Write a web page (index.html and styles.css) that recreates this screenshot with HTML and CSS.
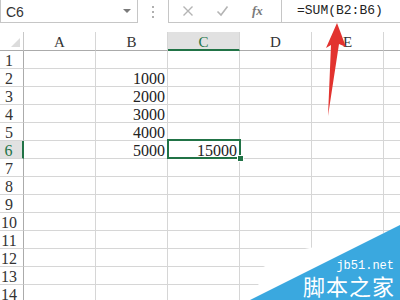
FILE: index.html
```html
<!DOCTYPE html>
<html>
<head>
<meta charset="utf-8">
<link rel="stylesheet" href="styles.css">
</head>
<body>
<div class="app">
  <div class="toolbar">
    <div class="namebox"><span class="ref">C6</span><span class="caret"></span></div>
    <div class="grip"><i></i><i></i><i></i></div>
    <div class="fnbox">
      <svg class="ico" width="12" height="12" viewBox="0 0 12 12"><path d="M1.5 1.5L10.5 10.5M10.5 1.5L1.5 10.5" stroke="#b4b4b4" stroke-width="1.4" fill="none"/></svg>
      <svg class="ico" width="13" height="12" viewBox="0 0 13 12"><path d="M1.5 6.5L5 10L11.5 1.5" stroke="#b4b4b4" stroke-width="1.6" fill="none"/></svg>
      <span class="fx">fx</span>
    </div>
    <div class="formula">=SUM(B2:B6)</div>
  </div>
  <div class="sheet">
    <div class="corner"><span class="tri"></span></div>
    <div class="ch">A</div><div class="ch">B</div><div class="ch sel">C</div><div class="ch">D</div><div class="ch">E</div><div class="ch last"></div>

    <div class="rh">1</div><div class="c"></div><div class="c"></div><div class="c"></div><div class="c"></div><div class="c"></div><div class="c last"></div>
    <div class="rh">2</div><div class="c"></div><div class="c">1000</div><div class="c"></div><div class="c"></div><div class="c"></div><div class="c last"></div>
    <div class="rh">3</div><div class="c"></div><div class="c">2000</div><div class="c"></div><div class="c"></div><div class="c"></div><div class="c last"></div>
    <div class="rh">4</div><div class="c"></div><div class="c">3000</div><div class="c"></div><div class="c"></div><div class="c"></div><div class="c last"></div>
    <div class="rh">5</div><div class="c"></div><div class="c">4000</div><div class="c"></div><div class="c"></div><div class="c"></div><div class="c last"></div>
    <div class="rh sel">6</div><div class="c"></div><div class="c">5000</div><div class="c active">15000</div><div class="c"></div><div class="c"></div><div class="c last"></div>
    <div class="rh">7</div><div class="c"></div><div class="c"></div><div class="c"></div><div class="c"></div><div class="c"></div><div class="c last"></div>
    <div class="rh">8</div><div class="c"></div><div class="c"></div><div class="c"></div><div class="c"></div><div class="c"></div><div class="c last"></div>
    <div class="rh">9</div><div class="c"></div><div class="c"></div><div class="c"></div><div class="c"></div><div class="c"></div><div class="c last"></div>
    <div class="rh">10</div><div class="c"></div><div class="c"></div><div class="c"></div><div class="c"></div><div class="c"></div><div class="c last"></div>
    <div class="rh">11</div><div class="c"></div><div class="c"></div><div class="c"></div><div class="c"></div><div class="c"></div><div class="c last"></div>
    <div class="rh">12</div><div class="c"></div><div class="c"></div><div class="c"></div><div class="c"></div><div class="c"></div><div class="c last"></div>
    <div class="rh">13</div><div class="c"></div><div class="c"></div><div class="c"></div><div class="c"></div><div class="c"></div><div class="c last"></div>
    <div class="rh">14</div><div class="c"></div><div class="c"></div><div class="c"></div><div class="c"></div><div class="c"></div><div class="c last"></div>
  </div>
  <svg class="overlay" width="400" height="300" viewBox="0 0 400 300">
    <polygon points="256,300 261,268 300,250 392,231 400,229 400,300" fill="#ffffff"/>
    <polygon points="250,300 400,225 400,300" fill="#3aa8df"/>
    <polygon points="337,23 346,47 339,44 328,116 331,45 326,48" fill="#e2332f"/>
  </svg>
  <div class="wm">
    <span class="wm-url">jb51.net</span>
    <span class="wm-name">脚本之家</span>
  </div>
</div>
</body>
</html>
```
FILE: styles.css
```css
html, body {
  margin: 0;
  padding: 0;
  background: #ffffff;
  overflow: hidden;
}
.app {
  position: relative;
  width: 400px;
  height: 300px;
  overflow: hidden;
  font-family: "Liberation Serif", serif;
  color: #222;
}
.toolbar {
  display: flex;
  height: 23px;
  box-sizing: border-box;
}
.namebox {
  width: 138px;
  box-sizing: border-box;
  border: 1px solid #c6c6c6;
  border-top: none;
  display: flex;
  align-items: center;
  justify-content: space-between;
  padding: 0 5px 0 5px;
}
.ref {
  font-family: "Liberation Sans", sans-serif;
  font-size: 14px;
  color: #333;
  padding-top: 1px;
}
.caret {
  width: 0;
  height: 0;
  border-left: 4px solid transparent;
  border-right: 4px solid transparent;
  border-top: 4px solid #7a7a7a;
  margin-right: 1px;
}
.grip {
  width: 30px;
  display: flex;
  flex-direction: column;
  align-items: center;
  justify-content: center;
  gap: 3px;
}
.grip i {
  display: block;
  width: 2px;
  height: 2px;
  background: #b0b0b0;
}
.fnbox {
  width: 113px;
  box-sizing: border-box;
  border-left: 1px solid #c6c6c6;
  border-bottom: 1px solid #c6c6c6;
  display: flex;
  align-items: center;
  padding-left: 13px;
  gap: 22px;
}
.fx {
  font-family: "Liberation Serif", serif;
  font-style: italic;
  font-weight: bold;
  font-size: 13px;
  color: #7a7a7a;
  margin-left: 1px;
}
.formula {
  flex: 1;
  box-sizing: border-box;
  border-left: 1px solid #c6c6c6;
  border-bottom: 1px solid #c6c6c6;
  padding-left: 15px;
  font-family: "Liberation Mono", monospace;
  font-size: 13px;
  line-height: 22px;
  color: #222;
}
.sheet {
  margin-top: 9px;
  display: grid;
  grid-template-columns: 24px repeat(5, 72px) 1fr;
  grid-template-rows: 19px;
  grid-auto-rows: 18px;
}
.sheet > div {
  box-sizing: border-box;
  border-right: 1px solid #d6d6d6;
  border-bottom: 1px solid #d6d6d6;
}
.sheet > div.last {
  border-right: none;
}
.corner {
  position: relative;
  border-right-color: #c8c8c8 !important;
  border-bottom-color: #ababab !important;
}
.tri {
  position: absolute;
  right: 3px;
  bottom: 3px;
  width: 0;
  height: 0;
  border-left: 9px solid transparent;
  border-bottom: 9px solid #dcdcdc;
}
.ch {
  font-size: 15px;
  text-align: center;
  line-height: 20px;
  color: #333;
  border-bottom-color: #ababab !important;
}
.ch.sel {
  background: #e1e1e1;
  border-bottom: 2px solid #217346 !important;
  color: #217346;
}
.rh {
  font-size: 16px;
  text-align: center;
  padding-right: 5px;
  line-height: 19px;
  color: #333;
  border-right-color: #ababab !important;
}
.rh.sel {
  background: #e1e1e1;
  border-right: 2px solid #217346 !important;
  color: #217346;
}
.c {
  font-size: 16px;
  text-align: right;
  padding-right: 2px;
  line-height: 19px;
  color: #222;
}
.c.active {
  position: relative;
}
.c.active::before {
  content: "";
  position: absolute;
  top: -2px;
  left: -1px;
  right: -2px;
  bottom: -1px;
  border: 2px solid #217346;
}
.c.active::after {
  content: "";
  position: absolute;
  right: -5px;
  bottom: -4px;
  width: 5px;
  height: 5px;
  background: #217346;
  border: 1px solid #fff;
}
.overlay {
  position: absolute;
  left: 0;
  top: 0;
}
.wm {
  position: absolute;
  right: 5px;
  bottom: 3px;
  display: flex;
  flex-direction: column;
  align-items: flex-end;
  gap: 2px;
  color: #fff;
}
.wm-url {
  font-family: "Liberation Mono", monospace;
  font-size: 12px;
  line-height: 12px;
  margin-right: 1px;
}
.wm-name {
  font-family: "Noto Sans CJK SC", sans-serif;
  font-size: 22px;
  line-height: 23px;
  letter-spacing: 1px;
}
```
